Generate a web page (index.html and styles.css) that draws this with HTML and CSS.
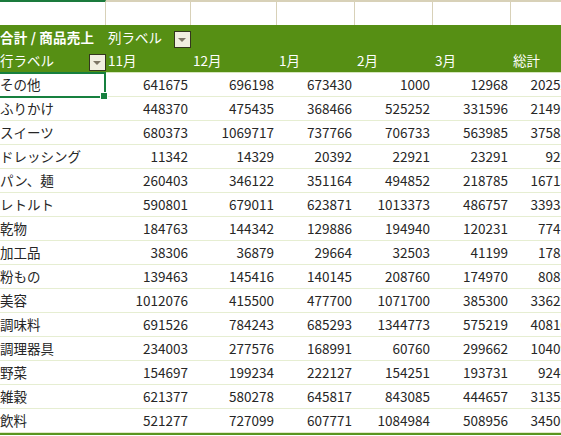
FILE: index.html
```html
<!DOCTYPE html>
<html lang="ja">
<head>
<meta charset="utf-8">
<link rel="stylesheet" href="styles.css">
</head>
<body>
<div class="sheet">
  <div class="grid">
    <div class="c top sel-col"></div><div class="c top"></div><div class="c top"></div><div class="c top"></div><div class="c top"></div><div class="c top"></div><div class="c top"></div>

    <div class="c h1 first"><b>合計 / 商品売上</b></div>
    <div class="c h1 lbl"><span>列ラベル</span><span class="dd"></span></div>
    <div class="c h1"></div><div class="c h1"></div><div class="c h1"></div><div class="c h1"></div><div class="c h1"></div>

    <div class="c h2 first lbl"><span>行ラベル</span><span class="dd"></span></div>
    <div class="c h2">11月</div><div class="c h2">12月</div><div class="c h2">1月</div><div class="c h2">2月</div><div class="c h2">3月</div><div class="c h2">総計</div>

    <div class="c n first selected">その他<span class="handle"></span></div><div class="c v">641675</div><div class="c v">696198</div><div class="c v">673430</div><div class="c v">1000</div><div class="c v">12968</div><div class="c v">2025271</div>
    <div class="c n first">ふりかけ</div><div class="c v">448370</div><div class="c v">475435</div><div class="c v">368466</div><div class="c v">525252</div><div class="c v">331596</div><div class="c v">2149119</div>
    <div class="c n first">スイーツ</div><div class="c v">680373</div><div class="c v">1069717</div><div class="c v">737766</div><div class="c v">706733</div><div class="c v">563985</div><div class="c v">3758574</div>
    <div class="c n first">ドレッシング</div><div class="c v">11342</div><div class="c v">14329</div><div class="c v">20392</div><div class="c v">22921</div><div class="c v">23291</div><div class="c v">92275</div>
    <div class="c n first">パン、麺</div><div class="c v">260403</div><div class="c v">346122</div><div class="c v">351164</div><div class="c v">494852</div><div class="c v">218785</div><div class="c v">1671326</div>
    <div class="c n first">レトルト</div><div class="c v">590801</div><div class="c v">679011</div><div class="c v">623871</div><div class="c v">1013373</div><div class="c v">486757</div><div class="c v">3393813</div>
    <div class="c n first">乾物</div><div class="c v">184763</div><div class="c v">144342</div><div class="c v">129886</div><div class="c v">194940</div><div class="c v">120231</div><div class="c v">774162</div>
    <div class="c n first">加工品</div><div class="c v">38306</div><div class="c v">36879</div><div class="c v">29664</div><div class="c v">32503</div><div class="c v">41199</div><div class="c v">178551</div>
    <div class="c n first">粉もの</div><div class="c v">139463</div><div class="c v">145416</div><div class="c v">140145</div><div class="c v">208760</div><div class="c v">174970</div><div class="c v">808754</div>
    <div class="c n first">美容</div><div class="c v">1012076</div><div class="c v">415500</div><div class="c v">477700</div><div class="c v">1071700</div><div class="c v">385300</div><div class="c v">3362276</div>
    <div class="c n first">調味料</div><div class="c v">691526</div><div class="c v">784243</div><div class="c v">685293</div><div class="c v">1344773</div><div class="c v">575219</div><div class="c v">4081054</div>
    <div class="c n first">調理器具</div><div class="c v">234003</div><div class="c v">277576</div><div class="c v">168991</div><div class="c v">60760</div><div class="c v">299662</div><div class="c v">1040992</div>
    <div class="c n first">野菜</div><div class="c v">154697</div><div class="c v">199234</div><div class="c v">222127</div><div class="c v">154251</div><div class="c v">193731</div><div class="c v">924040</div>
    <div class="c n first">雑穀</div><div class="c v">621377</div><div class="c v">580278</div><div class="c v">645817</div><div class="c v">843085</div><div class="c v">444657</div><div class="c v">3135214</div>
    <div class="c n first last">飲料</div><div class="c v last">521277</div><div class="c v last">727099</div><div class="c v last">607771</div><div class="c v last">1084984</div><div class="c v last">508956</div><div class="c v last">3450087</div>
  </div>
  <div class="grand"></div>
</div>
</body>
</html>
```

FILE: styles.css
```css
html, body {
  margin: 0;
  padding: 0;
  background: #ffffff;
  overflow: hidden;
}

.sheet {
  width: 561px;
  height: 436px;
  overflow: hidden;
  font-family: "Noto Sans CJK JP", "Noto Sans", sans-serif;
  font-size: 13.5px;
  color: #262626;
}

.grid {
  display: grid;
  grid-template-columns: 106px 85px 86px 78px 78px 78px 75px;
  grid-template-rows: 25px 24px 24px repeat(15, 24px);
  width: 586px;
}

.c {
  box-sizing: border-box;
  display: flex;
  align-items: center;
  white-space: nowrap;
  position: relative;
  line-height: 1;
}

.top {
  border-top: 2px solid #d8d1b8;
  border-right: 1px solid #d8d1b8;
}

.top.sel-col {
  border-top: 2px solid #1a7a3c;
}

.h1, .h2 {
  background: #568f14;
  color: #ffffff;
  padding-left: 2px;
}

.h1 {
  padding-top: 2px;
}

.h2 {
  border-bottom: 1px solid #d5e6bd;
}

.h1 b {
  font-weight: 700;
  letter-spacing: 0.2px;
}

.first {
  padding-left: 0;
}

.lbl {
  justify-content: space-between;
}

.h1.lbl {
  align-items: center;
}

.dd {
  box-sizing: border-box;
  width: 17px;
  height: 17px;
  border: 1px solid #34361e;
  background: #f1eee0;
  align-self: flex-end;
  margin-bottom: 1px;
  position: relative;
}

.h1 .dd {
  margin-bottom: 1px;
}

.dd::after {
  content: "";
  position: absolute;
  left: 3px;
  top: 6px;
  border-left: 4.5px solid transparent;
  border-right: 4.5px solid transparent;
  border-top: 4.5px solid #7d7565;
}

.n, .v {
  border-bottom: 1px solid #e6eed2;
  padding-top: 1px;
}

.v {
  justify-content: flex-end;
  padding-right: 3px;
}

.last {
  border-bottom: 1px solid #dfe9c8;
}

.selected::after {
  content: "";
  position: absolute;
  left: -2px;
  top: -1px;
  right: 0;
  bottom: -2px;
  border: 2px solid #17803f;
  pointer-events: none;
}

.handle {
  position: absolute;
  width: 6px;
  height: 6px;
  right: -2px;
  bottom: -4px;
  background: #17803f;
  border: 1px solid #ffffff;
  z-index: 2;
}

.grand {
  height: 2px;
  background: #5a9520;
}
```
